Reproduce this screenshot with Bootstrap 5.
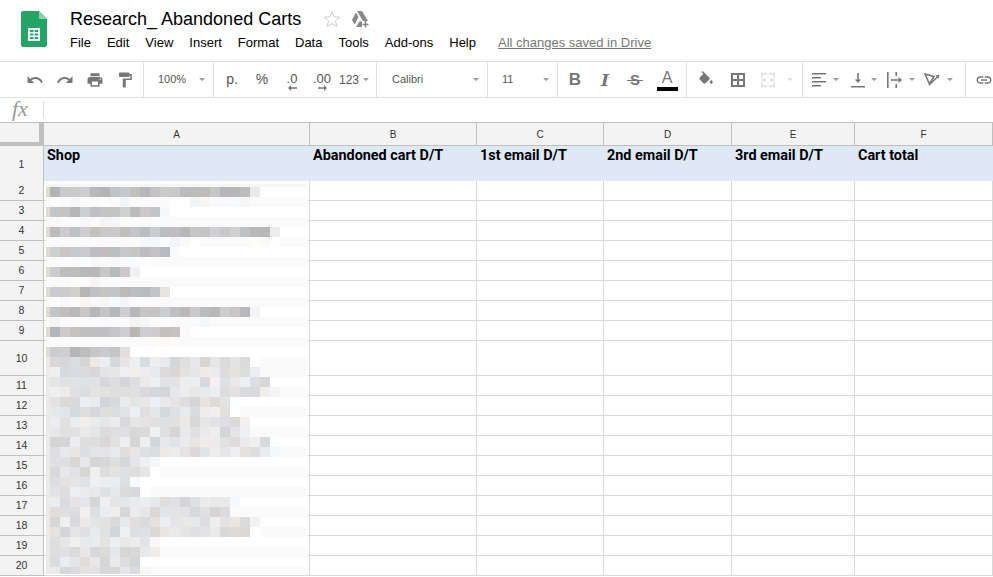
<!DOCTYPE html>
<html lang="en">
<head>
  <meta charset="UTF-8">
  <meta name="viewport" content="width=device-width, initial-scale=1.0">
  <title>Research_ Abandoned Carts</title>
  <link rel="stylesheet" href="https://cdn.jsdelivr.net/npm/bootstrap@5.3.0/dist/css/bootstrap.min.css">
  <style>
    html, body { height: 100%; overflow: hidden; }
    body { background: #fff; font-family: "Liberation Sans", Arial, sans-serif; color: #000; }

    .doc-head { height: 61px; padding-left: 21px; }
    .doc-logo { margin-top: 11px; margin-right: 23px; flex: none; }
    .doc-title { font-size: 18px; line-height: 22px; margin-top: 8px; }
    .doc-icons { margin-left: 22px; gap: 10px; }
    .menu-row { font-size: 13px; line-height: 16px; margin-top: 5px; gap: 16px; }
    .saved-note { color: #777; text-decoration: underline; margin-left: 6px; }

    .tool-bar { height: 37px; border-top: 1px solid #e0e0e0; border-bottom: 1px solid #e0e0e0; color: #666; font-size: 11px; }
    .tool-group { height: 100%; border-right: 1px solid #e0e0e0; flex: none; }
    .g-hist { width: 144px; padding-left: 20px; }
    .g-zoom { width: 70px; padding-left: 14px; }
    .g-nums { width: 163px; padding-left: 3px; }
    .g-font { width: 111px; padding-left: 15px; }
    .g-size { width: 70px; padding-left: 14px; }
    .g-text { width: 129px; padding-left: 2px; }
    .g-fill { width: 116px; padding-left: 4px; }
    .g-align { width: 163px; }
    .g-link { width: 28px; border-right: 0; padding-left: 9px; }
    .tool-item { width: 30px; height: 100%; flex: none; }
    .tool-item svg { fill: #777; display: block; }
    .tool-label { flex: 1; color: #555; }
    .tool-caret { width: 0; height: 0; border-left: 3.5px solid transparent; border-right: 3.5px solid transparent; border-top: 3.5px solid #999; flex: none; }
    .caret-end { margin-right: 8px; }
    .caret-off { border-top-color: #ddd; }
    .caret-align { margin-left: 6px; margin-right: 2px; }
    .tool-num { font-size: 14px; color: #555; }
    .tool-pct { font-size: 14px; color: #555; }
    .tool-dec { font-size: 13px; line-height: 11px; color: #555; padding-top: 4px; }
    .tool-dec svg { margin-top: 1px; }
    .tool-123 { width: 22px; font-size: 12px; color: #555; }
    .tool-letter { font-size: 17px; color: #777; line-height: 18px; }
    .tool-strike span { position: relative; font-weight: 700; font-size: 15px; }
    .tool-strike span::after { content: ""; position: absolute; left: -3px; right: -3px; top: 9px; height: 1.5px; background: #777; }
    .tool-serif { font-family: "DejaVu Serif", serif; font-style: italic; font-weight: 700; font-size: 17px; }
    .tool-color { line-height: 15px; font-size: 16px; padding-top: 1px; margin-left: 2px; }
    .color-bar { width: 21px; height: 4px; background: #000; margin-top: 2px; }
    .tool-nudge { margin-left: 2px; }
    .tool-w24 { width: 24px; }

    .fx-bar { height: 24px; }
    .fx-mark { width: 43px; font-family: "Liberation Serif", serif; font-style: italic; font-size: 22px; color: #999; padding-left: 12px; line-height: 22px; }
    .fx-line { width: 1px; height: 17px; background: #ddd; margin-top: 3px; }

    .sheet-wrap { position: relative; }
    .sheet-grid { border-collapse: separate; border-spacing: 0; table-layout: fixed; width: 993px; }
    .sheet-grid th, .sheet-grid td { padding: 0; border-right: 1px solid #d9d9d9; border-bottom: 1px solid #d9d9d9; overflow: hidden; }
    .sheet-grid thead th { height: 24px; background: #f3f3f3; border-top: 1px solid #c0c0c0; border-right-color: #c0c0c0; border-bottom: 1px solid #c0c0c0; font: 400 10px "Liberation Sans", sans-serif; color: #333; text-align: center; }
    .sheet-grid thead th.corner-cell { position: relative; border-right: 0; border-bottom: 0; }
    .corner-cell::before { content: ""; position: absolute; left: 39px; top: 0; width: 5px; bottom: 0; background: #c0c0c0; }
    .corner-cell::after { content: ""; position: absolute; left: 0; bottom: 0; width: 44px; height: 4px; background: #c0c0c0; }
    .sheet-grid tbody th { background: #f3f3f3; border-right-color: #c0c0c0; border-bottom-color: #c0c0c0; font: 400 10.5px "Liberation Sans", sans-serif; color: #333; text-align: center; padding-bottom: 2px; }
    .sheet-grid td { height: 20px; }
    .sheet-grid .row-tall td, .sheet-grid .row-tall th { height: 35px; padding-bottom: 0; }
    .sheet-grid .row-head td { background: #dee9f5; border-right: 0; border-bottom: 0; vertical-align: top; padding: 1px 3px 0; font: 700 14.4px Roboto, sans-serif; line-height: 17px; color: #000; white-space: nowrap; }
    .sheet-grid .row-head th { border-bottom: 0; }
    .blur-layer { position: absolute; left: 46px; top: 62px; display: block; }
  </style>
</head>
<body>
  <div class="doc-head d-flex">
    <svg class="doc-logo" width="26" height="36" viewBox="0 0 26 36">
      <path d="M2 0h16l8 8v26a2 2 0 0 1-2 2H2a2 2 0 0 1-2-2V2a2 2 0 0 1 2-2z" fill="#23a566"/>
      <path d="M18 0l8 8h-8z" fill="#8ed1b1"/>
      <path d="M7 17h12v13H7z M9 19v2h3.400v-2z M13.600 19v2H17v-2z M9 22.500v2h3.400v-2z M13.600 22.500v2H17v-2z M9 26v2h3.400v-2z M13.600 26v2H17v-2z" fill="#fff" fill-rule="evenodd"/>
    </svg>
    <div>
      <div class="d-flex align-items-center">
        <div class="doc-title">Research_ Abandoned Carts</div>
        <div class="doc-icons d-flex align-items-center mt-2">
          <svg width="18" height="18" viewBox="0 0 18 18"><path d="M9 1.500l2.200 5.300 5.600.4-4.300 3.700 1.400 5.600L9 13.500l-4.900 3 1.400-5.600-4.300-3.700 5.600-.4z" fill="none" stroke="#ccc"/></svg>
          <svg width="18" height="18" viewBox="0 0 18 18"><path d="M6 1h5l6 10h-5z M5 2.500l2.500 4.500-4 7.500L1 10z M8.500 11.500H11V17H5z" fill="#888"/><path d="M11 14.500h6M14 11.500v6" stroke="#fff" stroke-width="4"/><path d="M11.500 14.500h6M14.500 11v6.500" stroke="#888" stroke-width="1.600"/></svg>
        </div>
      </div>
      <div class="menu-row d-flex">
        <span>File</span><span>Edit</span><span>View</span><span>Insert</span><span>Format</span><span>Data</span><span>Tools</span><span>Add-ons</span><span>Help</span>
        <span class="saved-note">All changes saved in Drive</span>
      </div>
    </div>
  </div>

  <div class="tool-bar d-flex">
    <div class="tool-group g-hist d-flex">
      <div class="tool-item d-flex align-items-center justify-content-center"><svg width="18" height="18" viewBox="0 0 24 24"><path d="M12.500 8c-2.650 0-5.050.990-6.900 2.600L2 7v9h9l-3.620-3.620c1.390-1.160 3.160-1.880 5.120-1.880 3.540 0 6.550 2.310 7.600 5.500l2.370-.780C21.080 11.030 17.150 8 12.500 8z"/></svg></div>
      <div class="tool-item d-flex align-items-center justify-content-center"><svg width="18" height="18" viewBox="0 0 24 24"><path d="M18.400 10.600C16.550 8.990 14.150 8 11.500 8c-4.650 0-8.580 3.030-9.960 7.220L3.900 16c1.050-3.190 4.050-5.500 7.600-5.500 1.950 0 3.730.720 5.120 1.880L13 16h9V7l-3.600 3.600z"/></svg></div>
      <div class="tool-item d-flex align-items-center justify-content-center"><svg width="18" height="18" viewBox="0 0 24 24"><path d="M19 8H5c-1.660 0-3 1.340-3 3v6h4v4h12v-4h4v-6c0-1.660-1.340-3-3-3zm-3 11H8v-5h8v5zm3-7c-.550 0-1-.450-1-1s.450-1 1-1 1 .450 1 1-.450 1-1 1zm-1-9H6v4h12V3z"/></svg></div>
      <div class="tool-item d-flex align-items-center justify-content-center"><svg width="18" height="18" viewBox="0 0 24 24"><path d="M18 4V3c0-.550-.450-1-1-1H5c-.550 0-1 .450-1 1v4c0 .550.450 1 1 1h12c.550 0 1-.450 1-1V6h1v4H9v11c0 .550.450 1 1 1h2c.550 0 1-.450 1-1v-9h8V4h-3z"/></svg></div>
    </div>
    <div class="tool-group g-zoom d-flex align-items-center">
      <span class="tool-label">100%</span><span class="tool-caret caret-end"></span>
    </div>
    <div class="tool-group g-nums d-flex">
      <div class="tool-item d-flex align-items-center justify-content-center tool-num">p.</div>
      <div class="tool-item d-flex align-items-center justify-content-center tool-pct">%</div>
      <div class="tool-item d-flex flex-column align-items-center justify-content-center tool-dec">
        <span>.0</span><svg width="9" height="6" viewBox="0 0 9 6"><path d="M9 2.300H3V0L0 3l3 3V3.700h6z"/></svg>
      </div>
      <div class="tool-item d-flex flex-column align-items-center justify-content-center tool-dec">
        <span>.00</span><svg width="9" height="6" viewBox="0 0 9 6"><path d="M0 2.300h6V0l3 3-3 3V3.700H0z"/></svg>
      </div>
      <div class="tool-item tool-123 d-flex align-items-center justify-content-end">123</div>
      <div class="d-flex align-items-center ms-1"><span class="tool-caret"></span></div>
    </div>
    <div class="tool-group g-font d-flex align-items-center">
      <span class="tool-label">Calibri</span><span class="tool-caret caret-end"></span>
    </div>
    <div class="tool-group g-size d-flex align-items-center">
      <span class="tool-label">11</span><span class="tool-caret caret-end"></span>
    </div>
    <div class="tool-group g-text d-flex">
      <div class="tool-item d-flex align-items-center justify-content-center tool-letter fw-bold">B</div>
      <div class="tool-item d-flex align-items-center justify-content-center tool-letter tool-serif">I</div>
      <div class="tool-item d-flex align-items-center justify-content-center tool-letter tool-strike"><span>S</span></div>
      <div class="tool-item d-flex flex-column align-items-center justify-content-center tool-letter tool-color">
        <span>A</span><span class="color-bar"></span>
      </div>
    </div>
    <div class="tool-group g-fill d-flex">
      <div class="tool-item d-flex align-items-center justify-content-center"><svg width="18" height="18" viewBox="0 0 24 24"><path d="M16.560 8.940L7.620 0 6.210 1.410l2.380 2.380-5.150 5.150c-.590.590-.590 1.540 0 2.120l5.500 5.500c.290.290.680.440 1.060.440s.770-.150 1.060-.440l5.500-5.500c.590-.580.590-1.530 0-2.120zM19 11.500s-2 2.170-2 3.500c0 1.100.900 2 2 2s2-.900 2-2c0-1.330-2-3.500-2-3.500z"/></svg></div>
      <div class="tool-item tool-nudge d-flex align-items-center justify-content-center"><svg width="16" height="16" viewBox="0 0 16 16"><path d="M1 1h14v14H1z M7 7V3H3v4z M9 7h4V3H9z M7 9H3v4h4z M9 9v4h4V9z" fill-rule="evenodd"/></svg></div>
      <div class="tool-item d-flex align-items-center justify-content-center"><svg width="16" height="16" viewBox="0 0 16 16"><path d="M1 1h6v1.500H1z M9 1h6v1.500H9z M1 13.500h6V15H1z M9 13.500h6V15H9z M1 2.500h1.500v3H1z M13.500 2.500H15v3h-1.500z M1 10.500h1.500v3H1z M13.500 10.500H15v3h-1.500z M1 7.300h3V6l2.500 2L4 10V8.700H1z M15 7.300h-3V6L9.500 8l2.500 2V8.700h3z" fill="#ddd"/></svg></div>
      <div class="d-flex align-items-center ms-1"><span class="tool-caret caret-off"></span></div>
    </div>
    <div class="tool-group g-align d-flex align-items-center">
      <div class="tool-item tool-w24 d-flex align-items-center justify-content-end"><svg width="16" height="14" viewBox="0 0 16 14"><path d="M1 0h14v1.600H1z M1 4h9v1.600H1z M1 8h14v1.600H1z M1 12h9v1.600H1z"/></svg></div>
      <span class="tool-caret caret-align"></span>
      <div class="tool-item tool-w24 d-flex align-items-center justify-content-end"><svg width="14" height="16" viewBox="0 0 14 16"><path d="M6.200 1h1.600v6.500h2.400L7 11 3.800 7.500h2.400z M0 14h14v1.600H0z"/></svg></div>
      <span class="tool-caret caret-align"></span>
      <div class="tool-item tool-w24 d-flex align-items-center justify-content-end"><svg width="16" height="16" viewBox="0 0 16 16"><path d="M0 0h1.600v16H0z M8.500 0h1.600v4H8.500z M8.500 12h1.600v4H8.500z M4 7.200h7.500V5l3.500 3-3.500 3V8.800H4z"/></svg></div>
      <span class="tool-caret caret-align"></span>
      <div class="tool-item tool-w24 d-flex align-items-center justify-content-end"><svg width="18" height="16" viewBox="0 0 18 16"><path d="M2 2l9 2.500L6.500 12z" fill="none" stroke="#777" stroke-width="1.600"/><path d="M6 13L15 4.500" stroke="#777" stroke-width="1.600"/><path d="M16.500 2.500l-.8 4.200-3.200-3.200z"/></svg></div>
      <span class="tool-caret caret-align"></span>
    </div>
    <div class="tool-group g-link d-flex align-items-center">
      <svg width="18" height="18" viewBox="0 0 24 24" fill="#777"><path d="M3.900 12c0-1.710 1.390-3.100 3.100-3.100h4V7H7c-2.760 0-5 2.240-5 5s2.240 5 5 5h4v-1.900H7c-1.710 0-3.100-1.390-3.100-3.100zM8 13h8v-2H8v2zm9-6h-4v1.900h4c1.710 0 3.100 1.390 3.100 3.100s-1.390 3.100-3.100 3.100h-4V17h4c2.760 0 5-2.240 5-5s-2.240-5-5-5z"/></svg>
    </div>
  </div>

  <div class="fx-bar d-flex">
    <div class="fx-mark">fx</div>
    <div class="fx-line"></div>
  </div>

  <div class="sheet-wrap">
    <table class="sheet-grid">
      <colgroup>
        <col style="width:44px"><col style="width:266px"><col style="width:167px"><col style="width:127px"><col style="width:128px"><col style="width:123px"><col style="width:138px">
      </colgroup>
      <thead>
        <tr><th class="corner-cell"></th><th>A</th><th>B</th><th>C</th><th>D</th><th>E</th><th>F</th></tr>
      </thead>
      <tbody id="sheet-body">
        <tr class="row-tall row-head"><th>1</th><td>Shop</td><td>Abandoned cart D/T</td><td>1st email D/T</td><td>2nd email D/T</td><td>3rd email D/T</td><td>Cart total</td></tr>
      </tbody>
    </table>
    <svg id="blur-layer" class="blur-layer" width="262" height="390" viewBox="46 184 262 390"></svg>
  </div>

  <script src="https://cdn.jsdelivr.net/npm/bootstrap@5.3.0/dist/js/bootstrap.bundle.min.js"></script>
  <script>
    // rows 2-20, row 10 is the tall one
    const body = document.getElementById('sheet-body');
    for (let n = 2; n <= 20; n++) {
      const tr = document.createElement('tr');
      if (n === 10) tr.className = 'row-tall';
      tr.innerHTML = `<th>${n}</th><td></td><td></td><td></td><td></td><td></td><td></td>`;
      body.appendChild(tr);
    }

    // pixelated blur over the shop names: [y, end x] of each 10px band
    const topBands = [[187,260],[207,170],[227,280],[247,180],[267,140],[287,170],[307,260],[327,190],[347,130]];
    const lowBands = [[357,260],[367,260],[377,280],[387,280],[397,240],[407,240],[417,250],[427,250],[437,280],[447,280],
                      [457,160],[467,160],[477,140],[487,150],[497,240],[507,240],[517,260],[527,260],[537,160],[547,160],[557,150],[567,150]];
    let seed = 17;
    function rnd() {
      seed = (seed * 16807) % 2147483647;
      return seed / 2147483647;
    }
    function grey(base, spread) {
      const v = base + rnd() * spread;
      const t = rnd() * 6 - 3;
      return `rgb(${Math.round(v + t)},${Math.round(v)},${Math.round(v - t + (rnd() * 3))})`;
    }
    function rect(x, y, w, h, fill) {
      return `<rect x="${x}" y="${y}" width="${w}" height="${h}" fill="${fill}" shape-rendering="crispEdges"/>`;
    }
    let out = rect(46, 184, 262, 390, '#fff') + rect(46, 184, 261, 3, '#f4f6fa');
    topBands.forEach(([y, end]) => {
      out += rect(46, y, 4, 10, '#e0dcd2');
      for (let x = 50; x < end; x += 10) {
        const light = x + 10 >= end ? 222 : 180;
        out += rect(x, y, 10, 10, grey(light, 28));
      }
      // faint stripe below each band
      out += rect(46, y + 10, 261, 10, '#fafafa');
      for (let x = 50; x < end; x += 10) {
        if (rnd() < .5) out += rect(x, y + 10, 10, 10, grey(244, 10));
      }
    });
    lowBands.forEach(([y, end], i) => {
      if (i % 2) out += rect(end, y, 307 - end, 10, '#fafafa');
      out += rect(46, y, 4, 10, '#eceae6');
      for (let x = 50; x < end; x += 10) {
        const light = x + 10 >= end ? 236 : 212;
        out += rect(x, y, 10, 10, grey(light, 28));
      }
    });
    document.getElementById('blur-layer').innerHTML = out;
  </script>
</body>
</html>
